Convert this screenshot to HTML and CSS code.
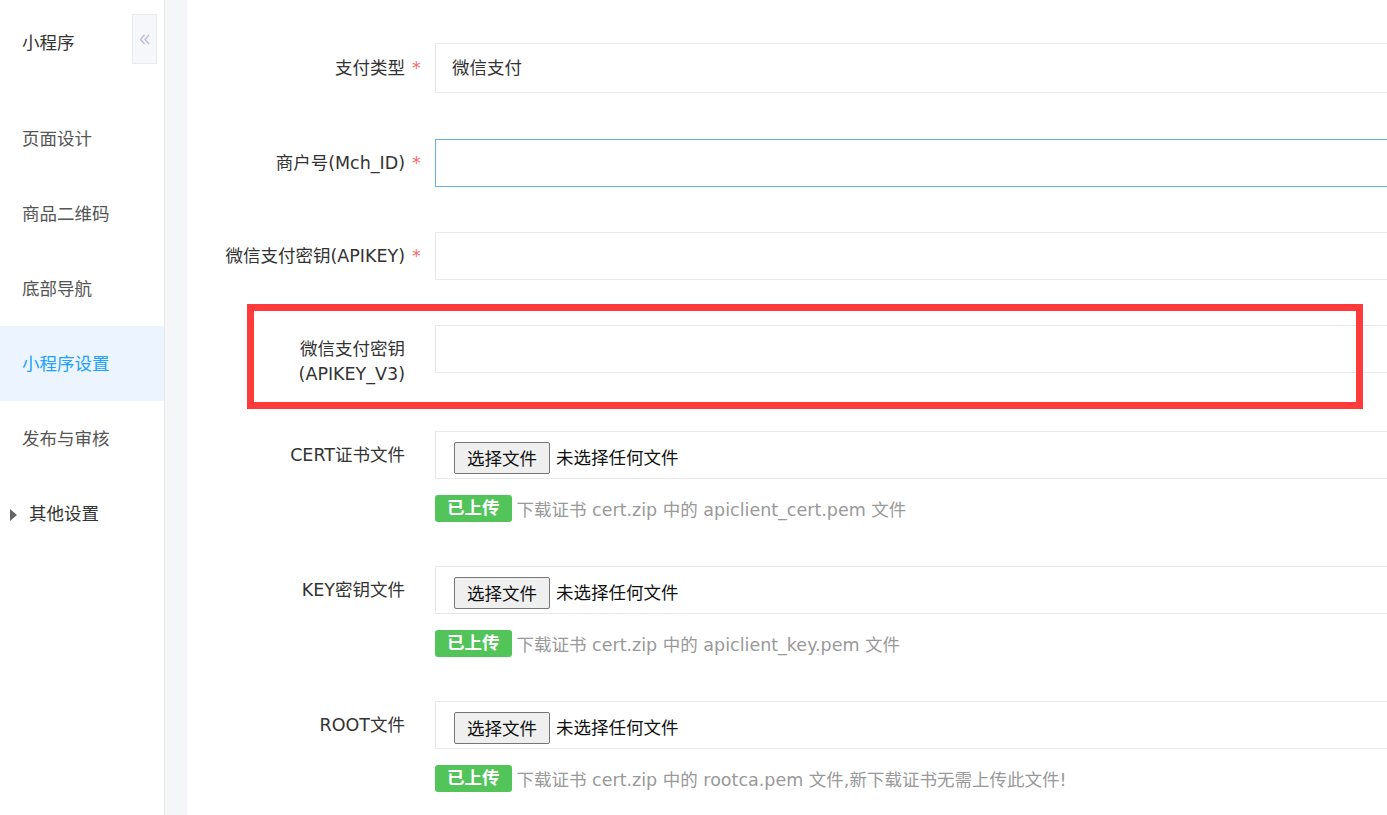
FILE: index.html
```html
<!DOCTYPE html>
<html>
<head>
  <meta charset=utf-8>
  <title>小程序设置</title>
  <link rel="stylesheet" href="styles.css">
</head>
<body>

<div class=layout>
  <div class=sidebar>
    <div class=sideHead>
      <span class=appName>小程序</span>
      <span class=collapseBtn>
        <svg width="11" height="11" viewBox="0 0 11 11"><path d="M5.5 1 L1.5 5.5 L5.5 10 M10 1 L6 5.5 L10 10" fill="none" stroke="#aebbd0" stroke-width="1.2"/></svg>
      </span>
    </div>
    <div class=navItem>页面设计</div>
    <div class=navItem>商品二维码</div>
    <div class=navItem>底部导航</div>
    <div class='navItem active'>小程序设置</div>
    <div class=navItem>发布与审核</div>
    <div class='navItem group'><span class=caret></span>其他设置</div>
  </div>
  <div class=gutter></div>

  <div class=main>
    <div class='row first'>
      <div class=label><span class=labelText>支付类型</span><span class=star>*</span></div>
      <div class='field tall'>微信支付</div>
    </div>

    <div class=row>
      <div class=label><span class=labelText>商户号(Mch_ID)</span><span class=star>*</span></div>
      <div class='field focus'></div>
    </div>

    <div class=row>
      <div class=label><span class=labelText>微信支付密钥(APIKEY)</span><span class=star>*</span></div>
      <div class=field></div>
    </div>

    <div class='row marked'>
      <div class=label><span class=labelText>微信支付密钥<br>(APIKEY_V3)</span><span class=star></span></div>
      <div class=field></div>
      <div class=redBox></div>
    </div>

    <div class=row>
      <div class=label><span class=labelText>CERT证书文件</span><span class=star></span></div>
      <div class=fileCol>
        <div class='field file'><button class=fileBtn>选择文件</button><span class=fileName>未选择任何文件</span></div>
        <div class=hint><span class=badge>已上传</span>下载证书 cert.zip 中的 apiclient_cert.pem 文件</div>
      </div>
    </div>

    <div class=row>
      <div class=label><span class=labelText>KEY密钥文件</span><span class=star></span></div>
      <div class=fileCol>
        <div class='field file'><button class=fileBtn>选择文件</button><span class=fileName>未选择任何文件</span></div>
        <div class=hint><span class=badge>已上传</span>下载证书 cert.zip 中的 apiclient_key.pem 文件</div>
      </div>
    </div>

    <div class=row>
      <div class=label><span class=labelText>ROOT文件</span><span class=star></span></div>
      <div class=fileCol>
        <div class='field file'><button class=fileBtn>选择文件</button><span class=fileName>未选择任何文件</span></div>
        <div class=hint><span class=badge>已上传</span>下载证书 cert.zip 中的 rootca.pem 文件,新下载证书无需上传此文件!</div>
      </div>
    </div>
  </div>
</div>

</body>
</html>
```

FILE: styles.css
```css
* {
  box-sizing: border-box;
  }
html, body {
  height: 100%;
  margin: 0;
  overflow: hidden;
  }
body {
  font: normal 17.5px "DejaVu Sans", "Noto Sans CJK SC", sans-serif;
  color: #333;
  background: #fff;
  }
.layout {
  display: flex;
  height: 100%;
}

/* sidebar */
.sidebar {
  width: 165px;
  flex: none;
  border-right: 1px solid #e8e8e8;
  background: #fff;
}
.sideHead {
  height: 101px;
  display: flex;
  align-items: flex-start;
  justify-content: space-between;
  padding: 14px 7px 0 22px;
}
.appName {
  line-height: 25px;
  margin-top: 17px;
  color: #333;
}
.collapseBtn {
  width: 25px;
  height: 50px;
  background: #f5f7fa;
  border: 1px solid #ebebeb;
  display: flex;
  align-items: center;
  justify-content: center;
}
.navItem {
  height: 75px;
  padding-top: 2px;
  line-height: 73px;
  padding-left: 22px;
  color: #555;
}
.navItem.active {
  background: #ecf5ff;
  color: #20a0ff;
}
.navItem.group {
  padding-left: 10px;
  color: #333;
  display: flex;
  align-items: center;
}
.caret {
  width: 0;
  height: 0;
  border-top: 6px solid transparent;
  border-bottom: 6px solid transparent;
  border-left: 7px solid #666;
  margin-right: 12px;
}
.gutter {
  width: 22px;
  flex: none;
  background: #f5f6f8;
}

/* form */
.main {
  flex: 1;
  padding-top: 43px;
  overflow: hidden;
}
.row {
  display: flex;
  align-items: flex-start;
  margin-bottom: 45px;
  position: relative;
}
.row.first {
  margin-bottom: 46px;
}
.row.marked {
  margin-bottom: 44px;
}
.label {
  width: 248px;
  flex: none;
  display: flex;
  justify-content: flex-end;
  padding-top: 12px;
  line-height: 25px;
}
.row.first .label {
  padding-top: 13px;
}
.labelText {
  text-align: right;
}
.star {
  width: 30px;
  padding-left: 7px;
  color: #f56c6c;
}
.field {
  width: 1100px;
  flex: none;
  height: 48px;
  border: 1px solid #e8e8e8;
  padding: 0 16px;
  line-height: 47px;
  color: #333;
}
.field.tall {
  height: 50px;
  line-height: 49px;
}
.field.focus {
  border-color: #66afe9;
}
.fileCol {
  width: 1100px;
  flex: none;
}
.field.file {
  display: flex;
  align-items: center;
  padding: 5px 0 0 18px;
}
.fileBtn {
  height: 32px;
  padding: 2px 12px 0;
  font: normal 17.5px "DejaVu Sans", "Noto Sans CJK SC", sans-serif;
  color: #111;
  background: #efefef;
  border: 1px solid #767676;
  border-radius: 2px;
  margin-right: 6px;
  line-height: 28px;
}
.fileName {
  color: #111;
  padding-top: 2px;
}
.hint {
  margin-top: 16px;
  height: 26px;
  display: flex;
  align-items: center;
  color: #999;
}
.badge {
  background: #52c45a;
  color: #fff;
  font-weight: bold;
  border-radius: 3px;
  height: 27px;
  line-height: 27px;
  padding: 0 12px;
  margin-right: 5px;
}

/* red annotation frame */
.redBox {
  position: absolute;
  left: 60px;
  top: -21px;
  width: 1116px;
  height: 105px;
  border: 7px solid #fe3a3a;
  pointer-events: none;
}
```
